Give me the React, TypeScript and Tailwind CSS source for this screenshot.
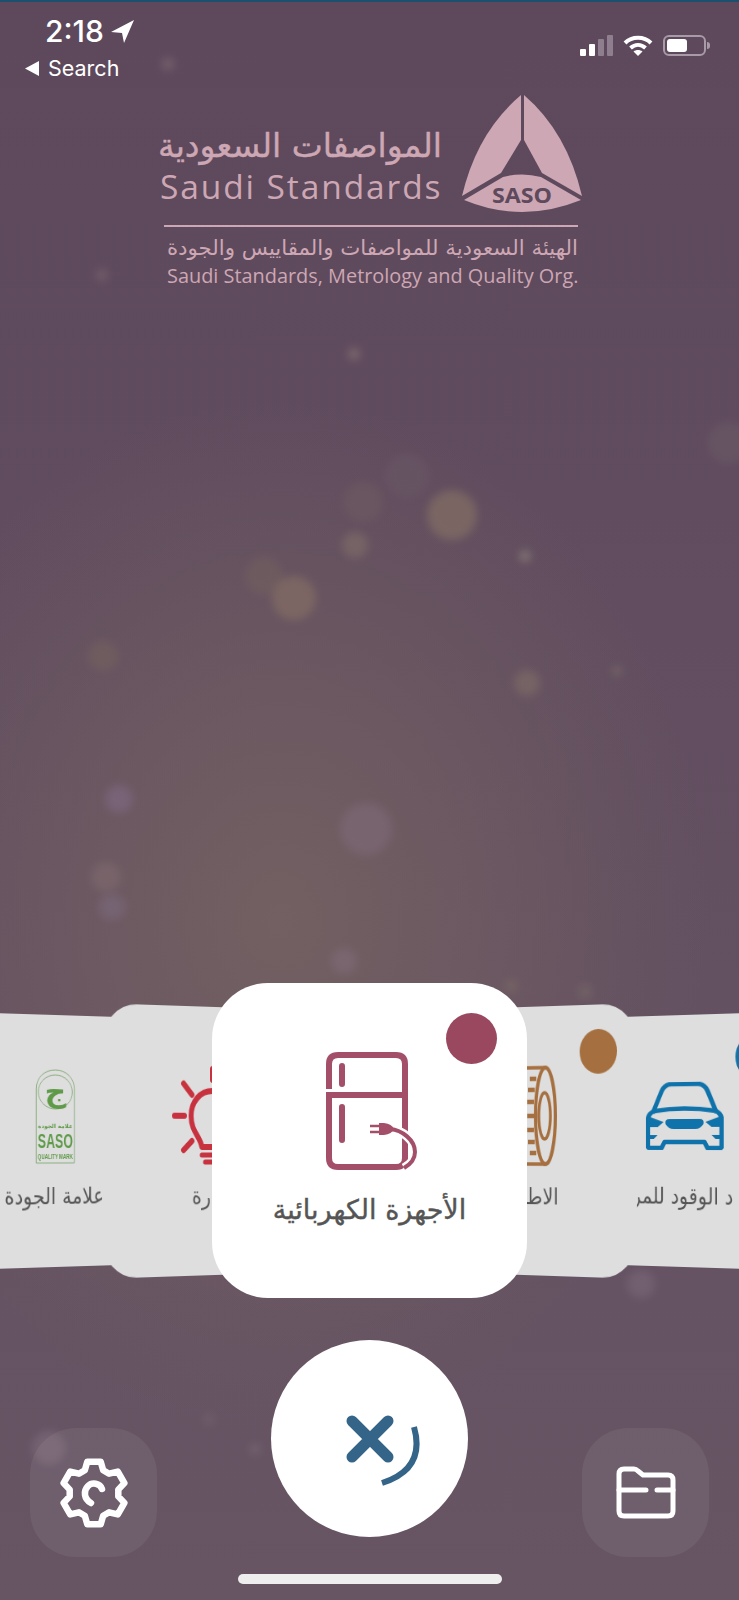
const arabic = { fontFamily: '"DejaVu Sans", sans-serif' };

const spots = [
  { x: 168, y: 64, d: 14, c: '#7d6a72' },
  { x: 102, y: 275, d: 12, c: '#7d6a72' },
  { x: 354, y: 354, d: 12, c: '#8d7c78' },
  { x: 728, y: 443, d: 40, c: '#6c5a66' },
  { x: 407, y: 476, d: 44, c: '#6a5765' },
  { x: 363, y: 502, d: 40, c: '#6e5b62' },
  { x: 452, y: 515, d: 50, c: '#8a7566' },
  { x: 355, y: 545, d: 26, c: '#80706a' },
  { x: 525, y: 556, d: 12, c: '#978a80' },
  { x: 264, y: 576, d: 38, c: '#72605f' },
  { x: 294, y: 598, d: 44, c: '#8a7266' },
  { x: 103, y: 656, d: 30, c: '#74625f' },
  { x: 617, y: 671, d: 12, c: '#7a6a68' },
  { x: 527, y: 683, d: 26, c: '#806f68' },
  { x: 119, y: 799, d: 28, c: '#806a86' },
  { x: 366, y: 829, d: 52, c: '#7f6a78' },
  { x: 106, y: 877, d: 30, c: '#7f6a6e' },
  { x: 112, y: 907, d: 26, c: '#7d6a7e' },
  { x: 344, y: 961, d: 26, c: '#806c78' },
  { x: 511, y: 986, d: 14, c: '#7a6a68' },
  { x: 585, y: 992, d: 14, c: '#7a6a68' },
  { x: 641, y: 1284, d: 28, c: '#7b6878' },
  { x: 209, y: 1419, d: 12, c: '#756470' },
  { x: 255, y: 1449, d: 12, c: '#7a6a74' },
  { x: 49, y: 1448, d: 34, c: '#7f6c7c' },
];

const gearPath = () => {
  const pts: string[] = [];
  [-90, -30, 30, 90, 150, 210].forEach((a) => {
    [
      [a - 22, 24.5],
      [a - 12, 32],
      [a + 12, 32],
      [a + 22, 24.5],
    ].forEach(([deg, r]) => {
      const rad = (deg * Math.PI) / 180;
      pts.push(`${(36 + r * Math.cos(rad)).toFixed(1)} ${(36 + r * Math.sin(rad)).toFixed(1)}`);
    });
  });
  return `M${pts.join('L')}Z`;
};

const SasoLogo = () => (
  <svg width="122" height="118" viewBox="0 0 122 118" fill="#cda7b3">
    <path d="M60 1V46L40 79L1 102Q16 38 60 1Z" />
    <path d="M63 1V46L81 79L121 102Q106 38 63 1Z" />
    <path d="M3 106L42 83Q61 78 80 83L120 106Q61 130 3 106Z" />
    <text x="61" y="109" textAnchor="middle" textLength="60" lengthAdjust="spacingAndGlyphs" fontSize="22" fontWeight="700" fill="#5e495d" fontFamily="Open Sans, sans-serif">
      SASO
    </text>
  </svg>
);

const QualityMark = () => (
  <svg width="49" height="95" viewBox="0 0 40 95" preserveAspectRatio="none" className="overflow-visible">
    <path d="M1 94V20C1 9 9 1 20 1S39 9 39 20V94Z" fill="none" stroke="#7fa873" strokeWidth="0.8" />
    <circle cx="20" cy="23" r="17" fill="none" stroke="#7fa873" strokeWidth="0.8" />
    <text x="20" y="33" textAnchor="middle" fontSize="30" fontWeight="700" fill="#5f9a49" fontFamily="DejaVu Sans, sans-serif">
      ج
    </text>
    <text x="20" y="59" textAnchor="middle" fontSize="5.6" fontWeight="700" fill="#5f9a49" fontFamily="DejaVu Sans, sans-serif">
      علامة الجودة
    </text>
    <text x="20" y="79" textAnchor="middle" textLength="35" lengthAdjust="spacingAndGlyphs" fontSize="20" fontWeight="700" fill="#5f9a49" fontFamily="Liberation Sans, sans-serif">
      SASO
    </text>
    <text x="20" y="90" textAnchor="middle" textLength="35" lengthAdjust="spacingAndGlyphs" fontSize="8" fontWeight="700" fill="#5f9a49" fontFamily="Liberation Sans, sans-serif">
      QUALITY MARK
    </text>
  </svg>
);

const Bulb = () => (
  <svg width="105" height="100" viewBox="0 0 105 100" fill="none" stroke="#c8323f" strokeLinecap="round">
    <path d="M49 3V14M14 18L24 29M3 50H15M14 84L24 75M84 18L74 29M95 50H83M84 84L74 75" strokeWidth="6" />
    <path d="M36 81C34 70 23 66 23 50C23 36 34 25 49 25S75 36 75 50C75 66 64 70 62 81Z" strokeWidth="6" strokeLinejoin="round" />
    <path d="M36 89H62M40 96H58" strokeWidth="5" />
  </svg>
);

const Tire = () => (
  <svg width="80" height="100" viewBox="0 0 80 100" fill="none" stroke="#a66f3f">
    <path d="M66 2H20C8 2 2 24 2 50S8 98 20 98H66" strokeWidth="3.5" />
    <ellipse cx="66" cy="50" rx="12" ry="48" strokeWidth="4" />
    <ellipse cx="65" cy="50" rx="7" ry="23" strokeWidth="3.5" />
    <path d="M47 13H55M45 24H53M44 36H52M44 50H52M44 64H52M45 76H53M47 87H55" strokeWidth="4.5" />
  </svg>
);

const Car = () => (
  <svg width="95" height="68" viewBox="0 0 78 68" preserveAspectRatio="none">
    <g fill="none" stroke="#0f72aa" strokeWidth="4.5" strokeLinejoin="round">
      <path d="M7 31L16 9Q19 2 26 2H52Q59 2 62 9L71 31" />
      <path d="M2 38Q2 32 8 29Q39 24 70 29Q76 32 76 38V64Q76 66 74 66H62L59 60H19L16 66H4Q2 66 2 64Z" />
    </g>
    <g fill="#0f72aa">
      <path d="M2 34L18 40L12 45H2Z" />
      <path d="M76 34L60 40L66 45H76Z" />
      <path d="M24 37H54Q59 37 58 42Q55 47 50 47H28Q23 47 20 42Q19 37 24 37Z" />
      <path d="M2 53H12L8 57H2Z" />
      <path d="M76 53H66L70 57H76Z" />
    </g>
  </svg>
);

const Fridge = () => (
  <svg width="95" height="118" viewBox="0 0 95 118" fill="none" stroke="#a34f6a">
    <path d="M3 37V12Q3 3 12 3H70Q79 3 79 12V106Q79 115 70 115H12Q3 115 3 106V43H79" strokeWidth="6" />
    <path d="M16 14V32M16 55V88" strokeWidth="6" strokeLinecap="round" />
    <path d="M64 77C76 78 89 88 89 100C89 107 85 112 78 116" stroke="#ffffff" strokeWidth="9" />
    <path d="M64 77C76 78 89 88 89 100C89 107 85 112 78 116" strokeWidth="4" />
    <path d="M53 71H58Q66 72 68 77Q66 82 58 83H53Z" fill="#a34f6a" stroke="none" />
    <path d="M44 74H53M44 80H53" strokeWidth="2.5" />
  </svg>
);

const Gear = () => (
  <svg width="72" height="72" viewBox="0 0 72 72" fill="none" stroke="#ffffff" strokeLinecap="round" strokeLinejoin="round">
    <path d={gearPath()} strokeWidth="6.5" />
    <path d="M44 32C42 26 34 25 30 29C25 34 26 42 33 46" strokeWidth="6.5" />
  </svg>
);

const Folder = () => (
  <svg width="60" height="53" viewBox="0 0 60 53" fill="none" stroke="#ffffff" strokeWidth="5" strokeLinecap="round" strokeLinejoin="round">
    <path d="M3 8Q3 3 8 3H18Q20 3 22 5L27 9H52Q57 9 57 14V45Q57 50 52 50H8Q3 50 3 45Z" />
    <path d="M3 24H30M41 24H57" />
  </svg>
);

type SideProps = {
  label: string;
  side: 'left' | 'right';
  tall?: boolean;
  dot?: string;
  children: React.ReactNode;
};

const SideCard: React.FC<SideProps> = ({ label, side, tall, dot, children }) => (
  <div
    className={`relative flex w-[268px] shrink-0 flex-col items-center rounded-[40px] bg-[#dedede] outline outline-transparent ${
      tall ? 'z-10 h-[268px] pt-[59px]' : 'h-[252px] pt-[51px]'
    } ${side === 'left' ? '[transform:perspective(2800px)_rotateY(35deg)]' : '[transform:perspective(2800px)_rotateY(-35deg)]'}`}
  >
    {dot && (
      <span
        className={`absolute size-11 rounded-full ${dot} ${tall ? 'top-[24px] right-[23px]' : 'top-[21px] right-[28px]'}`}
      />
    )}
    <div className="flex h-[100px] items-center justify-center">{children}</div>
    <div className="mt-[13px] flex w-[122px] justify-center overflow-hidden">
      <span dir="rtl" style={arabic} className="text-[23px] leading-[34px] whitespace-nowrap text-[#555555]">
        {label}
      </span>
    </div>
  </div>
);

const App = () => {
  return (
    <div className="relative flex h-[1600px] w-[739px] flex-col overflow-hidden bg-[radial-gradient(ellipse_430px_520px_at_280px_920px,#736062_0%,#73606200_100%),linear-gradient(180deg,#5d485c,#675564)]">
      {spots.map((s, i) => (
        <span
          key={i}
          className="absolute rounded-full opacity-60 blur-[4px]"
          style={{ left: s.x - s.d / 2, top: s.y - s.d / 2, width: s.d, height: s.d, backgroundColor: s.c }}
        />
      ))}

      <div className="relative h-[2px] bg-[#1d4f6e]" />

      <div className="relative flex justify-between pr-[29px] pl-[25px]" style={{ fontFamily: 'Inter, sans-serif' }}>
        <div className="flex flex-col text-white">
          <div className="mt-[13px] flex h-[32px] items-center pl-[20px]">
            <span className="text-[30px] leading-[32px] font-medium">2:18</span>
            <svg width="24" height="23" viewBox="0 0 24 23" fill="#ffffff" className="ml-[7px]">
              <path d="M23 0L0 12L11 13L13 23Z" />
            </svg>
          </div>
          <div className="mt-[9px] flex h-[24px] items-center gap-[9px]">
            <svg width="14" height="15" viewBox="0 0 14 15" fill="#ffffff">
              <path d="M0 7.5L14 0V15Z" />
            </svg>
            <span className="text-[21.5px] leading-[24px]">Search</span>
          </div>
        </div>
        <div className="mt-[33px] flex h-[21px] items-center gap-[10px]">
          <div className="flex items-end gap-[3px]">
            <span className="h-[7px] w-[6px] rounded-[1px] bg-white" />
            <span className="h-[12px] w-[6px] rounded-[1px] bg-white" />
            <span className="h-[17px] w-[6px] rounded-[1px] bg-[#8f7f8e]" />
            <span className="h-[21px] w-[6px] rounded-[1px] bg-[#8f7f8e]" />
          </div>
          <svg width="30" height="21" viewBox="0 0 30 21" fill="none" stroke="#ffffff" strokeWidth="4">
            <path d="M2 8C9 1 21 1 28 8" />
            <path d="M7.5 13C12 9 18 9 22.5 13" />
            <path d="M15 21L10.5 16.5C13 14.5 17 14.5 19.5 16.5Z" fill="#ffffff" stroke="none" />
          </svg>
          <div className="flex items-center">
            <div className="flex h-[21px] w-[43px] items-center rounded-[6px] border-2 border-[#a99aa7] p-[2px]">
              <span className="h-[13px] w-[20px] rounded-[3px] bg-white" />
            </div>
            <span className="ml-[1px] h-[7px] w-[3px] rounded-r-full bg-[#a99aa7]" />
          </div>
        </div>
      </div>

      <div className="relative mt-[14px] ml-[162px] flex w-[421px] flex-col text-[#cda7b3]">
        <div className="flex justify-between">
          <div className="flex w-[280px] flex-col pt-[29px]">
            <span dir="rtl" style={arabic} className="text-right text-[33px] leading-[46px] whitespace-nowrap [-webkit-text-stroke:0.4px_#cda7b3]">
              المواصفات السعودية
            </span>
            <span className="ml-[-2px] text-[33.5px] leading-[34px] tracking-[1.9px] whitespace-nowrap" style={{ fontFamily: '"Open Sans", sans-serif' }}>
              Saudi Standards
            </span>
          </div>
          <SasoLogo />
        </div>
        <div className="mt-[13px] ml-[2px] h-[2px] w-[414px] bg-[#cda7b3]" />
        <span dir="rtl" style={arabic} className="mt-[7px] ml-[6px] w-[410px] text-right text-[21.3px] leading-[28px] whitespace-nowrap">
          الهيئة السعودية للمواصفات والمقاييس والجودة
        </span>
        <span className="ml-[5px] text-[19.9px] leading-[28px] whitespace-nowrap" style={{ fontFamily: '"Open Sans", sans-serif' }}>
          Saudi Standards, Metrology and Quality Org.
        </span>
      </div>

      <div className="relative mt-auto flex h-[315px] shrink-0 items-center justify-center overflow-hidden">
        <SideCard label="علامة الجودة" side="left">
          <QualityMark />
        </SideCard>
        <div className="z-10 ml-[-108px] shrink-0">
          <SideCard label="الإنارة" side="left" tall>
            <Bulb />
          </SideCard>
        </div>
        <div className="relative z-20 mr-[-137px] ml-[-137px] flex h-[315px] w-[315px] shrink-0 flex-col items-center rounded-[56px] bg-white pt-[69px]">
          <span className="absolute top-[30px] right-[30px] size-[51px] rounded-full bg-[#99485f]" />
          <div className="pl-[7px]">
            <Fridge />
          </div>
          <span dir="rtl" style={arabic} className="mt-[20px] text-[27px] leading-[40px] whitespace-nowrap text-[#555555] [-webkit-text-stroke:0.4px_#555555]">
            الأجهزة الكهربائية
          </span>
        </div>
        <div className="z-10 shrink-0">
          <SideCard label="الاطارات" side="right" tall dot="bg-[#a66f3f]">
            <Tire />
          </SideCard>
        </div>
        <div className="ml-[-108px] shrink-0">
          <SideCard label="اقتصاد الوقود للمركبات" side="right" dot="bg-[#0f72aa]">
            <Car />
          </SideCard>
        </div>
      </div>

      <div className="relative mt-[42px] flex h-[217px] shrink-0 justify-between px-[30px]">
        <button className="flex h-[129px] w-[127px] items-center justify-center self-end rounded-[46px] bg-white/[0.06]">
          <Gear />
        </button>
        <button className="flex size-[197px] items-start justify-center rounded-full bg-white pt-[70px] pl-[26px]">
          <svg width="85" height="80" viewBox="0 0 85 80" fill="none" stroke="#346488">
            <path d="M12 11L48 47M48 11L12 47" strokeWidth="11" strokeLinecap="round" />
            <path d="M74 17Q86 59 42 73" strokeWidth="6" />
          </svg>
        </button>
        <button className="flex h-[129px] w-[127px] items-center justify-center self-end rounded-[46px] bg-white/[0.06]">
          <Folder />
        </button>
      </div>

      <div className="relative mt-[17px] mb-[16px] h-[10px] w-[264px] shrink-0 self-center rounded-full bg-[#eeeeee]" />
    </div>
  );
};

export default App;
